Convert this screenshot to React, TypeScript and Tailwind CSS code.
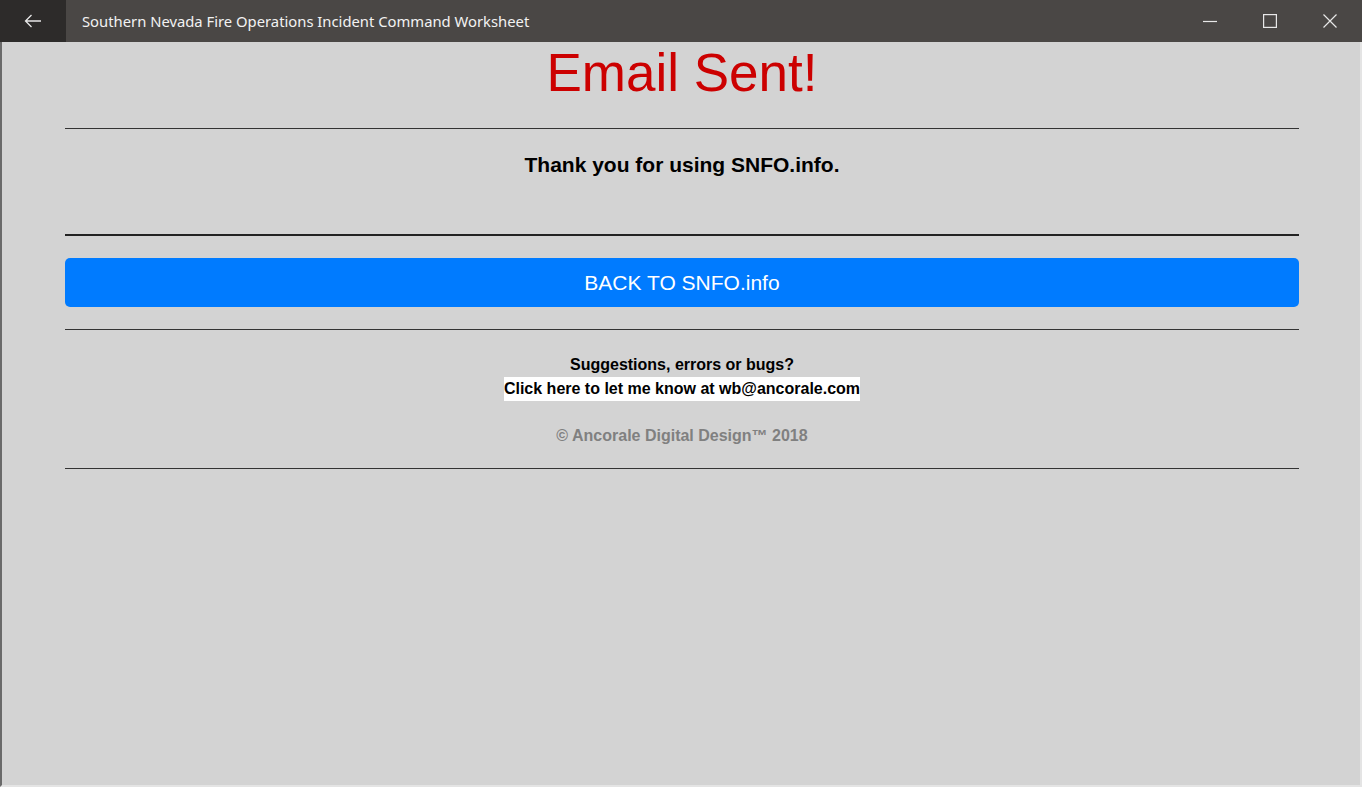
const TitleBar = () => {
  return (
    <div className="flex h-[42px] items-stretch bg-[#4a4745] text-white font-['Segoe_UI','Noto_Sans',sans-serif]">
      <div className="flex w-[66px] items-center justify-center bg-[#2d2b2a]">
        <svg width="18" height="14" viewBox="0 0 18 14" fill="none" stroke="#e8e8e8" strokeWidth="1.3">
          <path d="M17 7H1.5M7.5 1L1.5 7l6 6" />
        </svg>
      </div>
      <div className="flex flex-1 items-center pl-[16px] text-[14.8px] text-[#f2f2f2]">
        Southern Nevada Fire Operations Incident Command Worksheet
      </div>
      <div className="flex w-[60px] items-center justify-center">
        <svg width="14" height="14" viewBox="0 0 14 14" stroke="#e8e8e8" strokeWidth="1.2">
          <path d="M0 7.5h14" />
        </svg>
      </div>
      <div className="flex w-[60px] items-center justify-center">
        <svg width="14" height="14" viewBox="0 0 14 14" fill="none" stroke="#e8e8e8" strokeWidth="1.2">
          <rect x="0.6" y="0.6" width="12.8" height="12.8" />
        </svg>
      </div>
      <div className="flex w-[62px] items-center justify-center pr-[2px]">
        <svg width="14" height="14" viewBox="0 0 14 14" stroke="#e8e8e8" strokeWidth="1.2">
          <path d="M0.5 0.5l13 13M13.5 0.5l-13 13" />
        </svg>
      </div>
    </div>
  );
};

export default function App() {
  return (
    <div className="flex h-[787px] w-[1362px] flex-col overflow-hidden bg-[#d3d3d3] font-['Liberation_Sans',Arial,sans-serif]">
      <TitleBar />
      <div className="flex flex-1 border-l-2 border-r-2 border-b-2 border-l-[#6a6a6a] border-r-[#e4e4e4] border-b-[#e4e4e4]">
        <div className="flex flex-1 flex-col pl-[63px] pr-[61px]">
          <h1 className="mt-[4px] text-center text-[53px] leading-[54px] text-[#cc0000]">
            Email Sent!
          </h1>
          <hr className="mt-[28px] border-t border-[#333]" />
          <p className="mt-[24px] text-center text-[21px] font-bold leading-[24px] text-black">
            Thank you for using SNFO.info.
          </p>
          <hr className="mt-[57px] border-t-2 border-[#222]" />
          <button className="mt-[22px] h-[49px] rounded-[5px] bg-[#007bff] text-[21px] text-white">
            BACK TO SNFO.info
          </button>
          <hr className="mt-[22px] border-t border-[#333]" />
          <div className="mt-[23px] flex flex-col items-center text-[16px] font-bold leading-[24px] text-black">
            <span>Suggestions, errors or bugs?</span>
            <span className="bg-white">Click here to let me know at wb@ancorale.com</span>
          </div>
          <p className="mt-[23px] text-center text-[16px] font-bold leading-[24px] text-[#808080]">
            © Ancorale Digital Design™ 2018
          </p>
          <hr className="mt-[20px] border-t border-[#333]" />
        </div>
      </div>
    </div>
  );
}
